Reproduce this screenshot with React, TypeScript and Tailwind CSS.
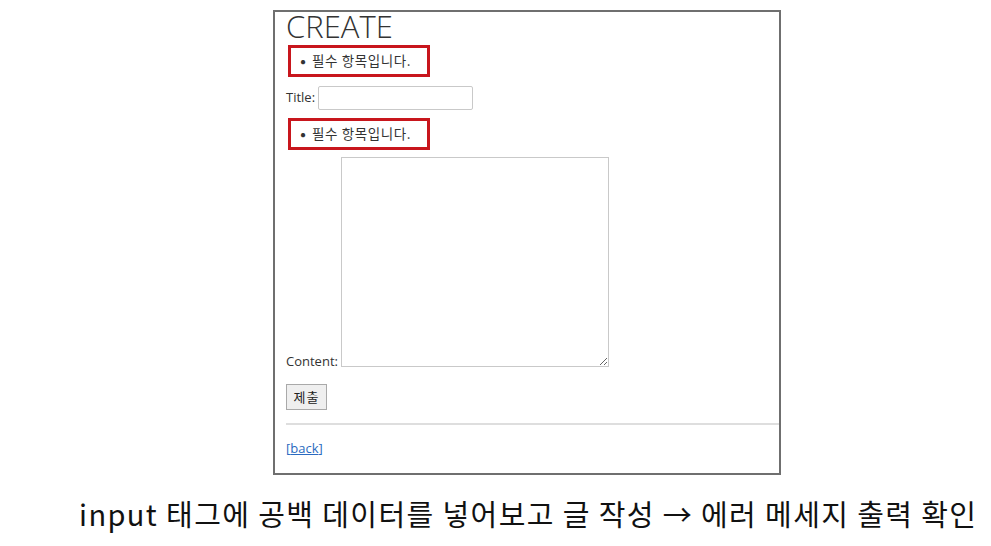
const KR = "font-['Open_Sans','Noto_Sans_CJK_KR',sans-serif]";

const ErrorBox = () => (
  <div className="ml-[2px] flex h-[32px] w-[142px] items-center border-[3px] border-[#c8161d] pl-[9px] text-[#333]">
    <span className="mr-[6px] text-[10px]">●</span>
    <span className="font-['Noto_Sans_CJK_KR',sans-serif] text-[13.5px] leading-none tracking-[0.6px]">필수 항목입니다.</span>
  </div>
);

const App = () => {
  return (
    <div className="h-[546px] w-[991px] overflow-hidden bg-white">
      <div className="ml-[273px] mt-[10px] flex h-[465px] w-[508px] flex-col border-2 border-[#6f6f6f] pl-[11px]">
        <h1 className={`${KR} text-[31px] font-light leading-[28px] text-[#333]`}>CREATE</h1>
        <div className="mt-[5px]">
          <ErrorBox />
        </div>
        <div className={`${KR} mt-[9px] flex items-center text-[13px] text-[#333]`}>
          <span>Title:</span>
          <input className="ml-[3px] h-[24px] w-[155px] rounded-[2px] border border-[#c9c9c9] bg-white" />
        </div>
        <div className="mt-[8px]">
          <ErrorBox />
        </div>
        <div className={`${KR} mt-[7px] flex items-end text-[13px] text-[#333]`}>
          <span className="leading-[12px]">Content:</span>
          <textarea className="ml-[3px] h-[210px] w-[268px] resize border border-[#c9c9c9] bg-white" />
        </div>
        <div className="mt-[17px]">
          <button className="h-[26px] w-[41px] border border-[#a9a9a9] bg-[#efefef] font-['Noto_Sans_CJK_KR',sans-serif] text-[13px] tracking-[1px] text-[#222]">
            제출
          </button>
        </div>
        <hr className="mt-[13px] border-t-2 border-[#dedede]" />
        <div className={`${KR} mt-[14px] text-[13px] text-[#2a6ac0]`}>
          [<span className="underline">back</span>]
        </div>
      </div>
      <p className="ml-[79px] mt-[20px] font-['Noto_Sans_CJK_KR',sans-serif] text-[29px] leading-[36px] tracking-[1.4px] text-[#111]">
        input 태그에 공백 데이터를 넣어보고 글 작성 → 에러 메세지 출력 확인
      </p>
    </div>
  );
};

export default App;
